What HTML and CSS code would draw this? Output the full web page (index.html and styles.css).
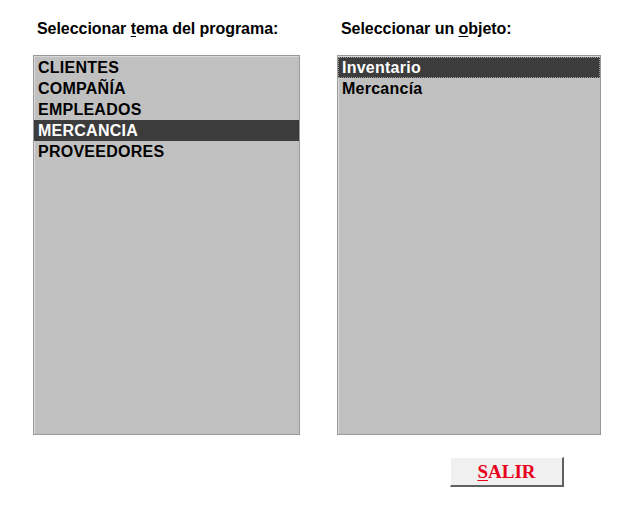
FILE: index.html
```html
<!DOCTYPE html>
<html lang="es">
<head>
<meta charset="utf-8">
<title>Seleccionar</title>
<link rel="stylesheet" href="styles.css">
</head>
<body>
<div class="page">
  <div class="columns">
    <div class="col col-left">
      <div class="heading">Seleccionar <u>t</u>ema del programa:</div>
      <div class="listbox">
        <div class="item">CLIENTES</div>
        <div class="item">COMPAÑÍA</div>
        <div class="item">EMPLEADOS</div>
        <div class="item selected">MERCANCIA</div>
        <div class="item">PROVEEDORES</div>
      </div>
    </div>
    <div class="col col-right">
      <div class="heading">Seleccionar un <u>o</u>bjeto:</div>
      <div class="listbox">
        <div class="item selected focused">Inventario</div>
        <div class="item">Mercancía</div>
      </div>
    </div>
  </div>
  <div class="actions">
    <button class="btn"><u>S</u>ALIR</button>
  </div>
</div>
</body>
</html>
```
FILE: styles.css
```css
html, body {
  margin: 0;
  padding: 0;
  background: #ffffff;
}
.page {
  width: 628px;
  height: 510px;
  padding: 20px 0 0 33px;
  box-sizing: border-box;
  font-family: "Liberation Sans", Arial, sans-serif;
}
.columns {
  display: flex;
  gap: 37px;
}
.col-left { width: 267px; }
.col-right { width: 264px; }
.heading {
  font-weight: bold;
  font-size: 16px;
  line-height: 18px;
  padding-left: 4px;
  height: 35px;
  color: #000;
  letter-spacing: -0.05px;
}
.heading u {
  text-decoration-thickness: 1px;
  text-underline-offset: 2px;
}
.listbox {
  height: 380px;
  box-sizing: border-box;
  border: 1px solid #9a9a9a;
  box-shadow: inset 1px 1px 0 #d8d8d8;
  background: #c0c0c0;
  padding-top: 1px;
}
.item {
  height: 21px;
  line-height: 21px;
  padding-left: 4px;
  font-size: 16px;
  font-weight: bold;
  color: #000;
  white-space: nowrap;
  letter-spacing: 0.25px;
}
.item.selected {
  background: #3c3c3c;
  color: #ffffff;
}
.item.focused {
  outline: 1px dotted #9a9a9a;
  outline-offset: -1px;
}
.actions {
  display: flex;
  justify-content: flex-end;
  padding-right: 64px;
  margin-top: 22px;
}
.btn {
  width: 114px;
  height: 30px;
  background: #f0f0f0;
  border: none;
  border-top: 1px solid #ffffff;
  border-left: 1px solid #ffffff;
  border-right: 2px solid #606060;
  border-bottom: 2px solid #606060;
  box-sizing: border-box;
  font-family: "Liberation Serif", "Times New Roman", serif;
  font-weight: bold;
  font-size: 19px;
  color: #e8001c;
  padding: 0;
  line-height: 26px;
}
.btn u {
  text-decoration-thickness: 1px;
  text-underline-offset: 2px;
}
```
